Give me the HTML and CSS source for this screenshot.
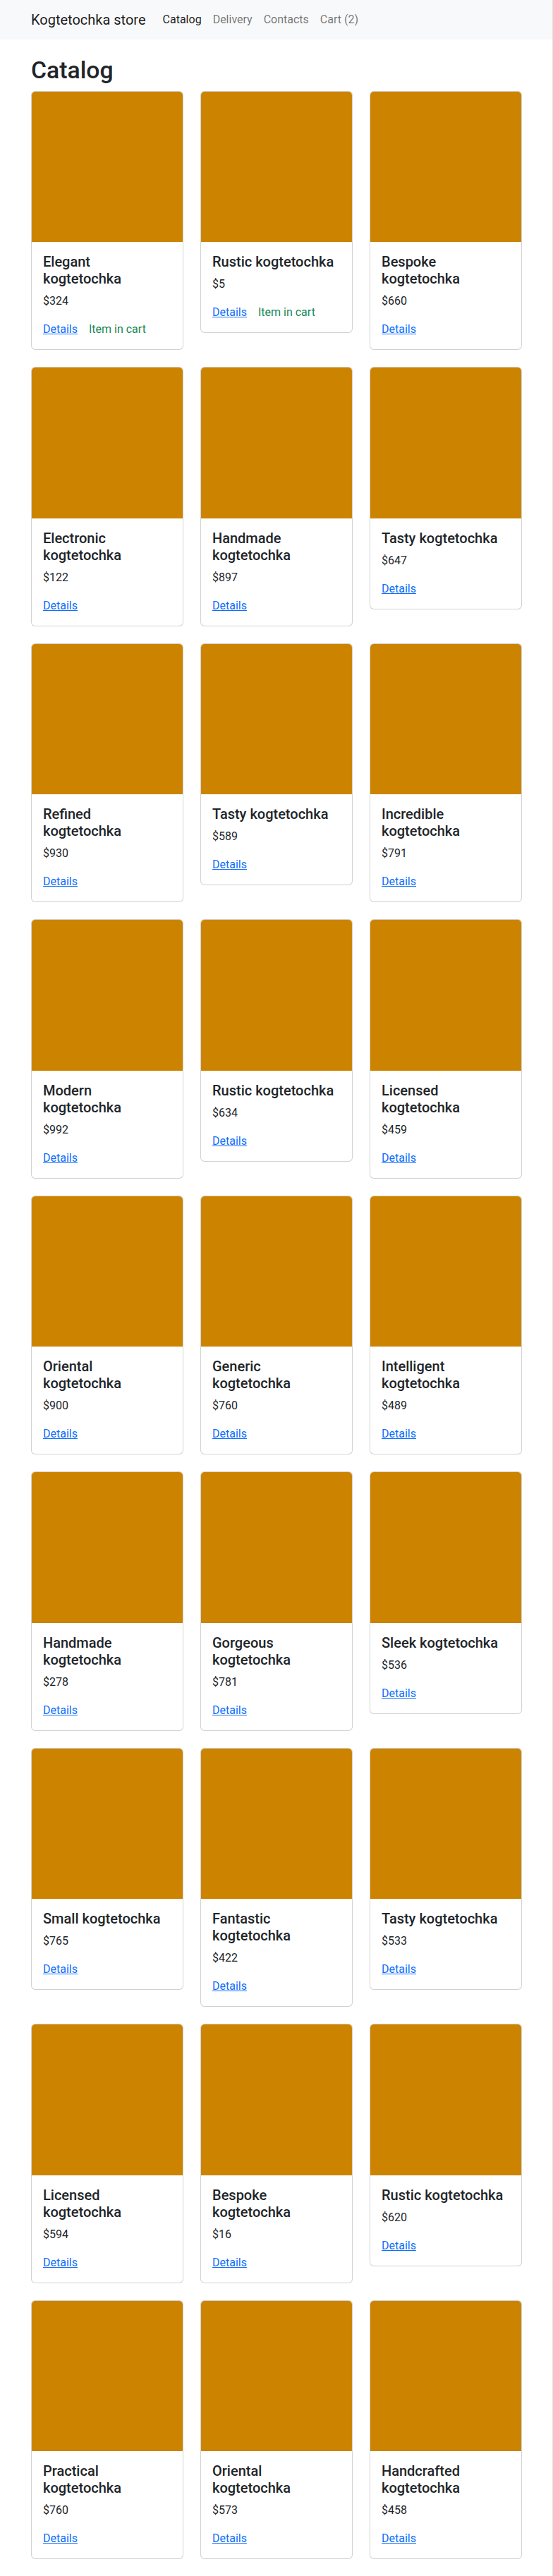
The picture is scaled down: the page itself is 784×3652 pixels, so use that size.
FILE: index.html
```html
<!DOCTYPE html>
<html lang="en">
<head>
<meta charset="utf-8">
<title>Kogtetochka store</title>
<link rel="stylesheet" href="styles.css">
</head>
<body>
<nav class="navbar">
  <div class="container nav-inner">
    <a class="brand" href="#">Kogtetochka store</a>
    <ul class="nav-links">
      <li><a class="nav-link active" href="#">Catalog</a></li>
      <li><a class="nav-link" href="#">Delivery</a></li>
      <li><a class="nav-link" href="#">Contacts</a></li>
      <li><a class="nav-link" href="#">Cart (2)</a></li>
    </ul>
  </div>
</nav>
<main class="container main">
  <h1 class="page-title">Catalog</h1>
  <div class="grid">
    <div class="card"><div class="card-img"></div><div class="card-body"><h5 class="card-title">Elegant kogtetochka</h5><p class="price">$324</p><div class="actions"><a href="#" class="details">Details</a><span class="in-cart">Item in cart</span></div></div></div>
    <div class="card"><div class="card-img"></div><div class="card-body"><h5 class="card-title">Rustic kogtetochka</h5><p class="price">$5</p><div class="actions"><a href="#" class="details">Details</a><span class="in-cart">Item in cart</span></div></div></div>
    <div class="card"><div class="card-img"></div><div class="card-body"><h5 class="card-title">Bespoke kogtetochka</h5><p class="price">$660</p><div class="actions"><a href="#" class="details">Details</a></div></div></div>

    <div class="card"><div class="card-img"></div><div class="card-body"><h5 class="card-title">Electronic kogtetochka</h5><p class="price">$122</p><div class="actions"><a href="#" class="details">Details</a></div></div></div>
    <div class="card"><div class="card-img"></div><div class="card-body"><h5 class="card-title">Handmade kogtetochka</h5><p class="price">$897</p><div class="actions"><a href="#" class="details">Details</a></div></div></div>
    <div class="card"><div class="card-img"></div><div class="card-body"><h5 class="card-title">Tasty kogtetochka</h5><p class="price">$647</p><div class="actions"><a href="#" class="details">Details</a></div></div></div>

    <div class="card"><div class="card-img"></div><div class="card-body"><h5 class="card-title">Refined kogtetochka</h5><p class="price">$930</p><div class="actions"><a href="#" class="details">Details</a></div></div></div>
    <div class="card"><div class="card-img"></div><div class="card-body"><h5 class="card-title">Tasty kogtetochka</h5><p class="price">$589</p><div class="actions"><a href="#" class="details">Details</a></div></div></div>
    <div class="card"><div class="card-img"></div><div class="card-body"><h5 class="card-title">Incredible kogtetochka</h5><p class="price">$791</p><div class="actions"><a href="#" class="details">Details</a></div></div></div>

    <div class="card"><div class="card-img"></div><div class="card-body"><h5 class="card-title">Modern kogtetochka</h5><p class="price">$992</p><div class="actions"><a href="#" class="details">Details</a></div></div></div>
    <div class="card"><div class="card-img"></div><div class="card-body"><h5 class="card-title">Rustic kogtetochka</h5><p class="price">$634</p><div class="actions"><a href="#" class="details">Details</a></div></div></div>
    <div class="card"><div class="card-img"></div><div class="card-body"><h5 class="card-title">Licensed kogtetochka</h5><p class="price">$459</p><div class="actions"><a href="#" class="details">Details</a></div></div></div>

    <div class="card"><div class="card-img"></div><div class="card-body"><h5 class="card-title">Oriental kogtetochka</h5><p class="price">$900</p><div class="actions"><a href="#" class="details">Details</a></div></div></div>
    <div class="card"><div class="card-img"></div><div class="card-body"><h5 class="card-title">Generic kogtetochka</h5><p class="price">$760</p><div class="actions"><a href="#" class="details">Details</a></div></div></div>
    <div class="card"><div class="card-img"></div><div class="card-body"><h5 class="card-title">Intelligent kogtetochka</h5><p class="price">$489</p><div class="actions"><a href="#" class="details">Details</a></div></div></div>

    <div class="card"><div class="card-img"></div><div class="card-body"><h5 class="card-title">Handmade kogtetochka</h5><p class="price">$278</p><div class="actions"><a href="#" class="details">Details</a></div></div></div>
    <div class="card"><div class="card-img"></div><div class="card-body"><h5 class="card-title">Gorgeous kogtetochka</h5><p class="price">$781</p><div class="actions"><a href="#" class="details">Details</a></div></div></div>
    <div class="card"><div class="card-img"></div><div class="card-body"><h5 class="card-title">Sleek kogtetochka</h5><p class="price">$536</p><div class="actions"><a href="#" class="details">Details</a></div></div></div>

    <div class="card"><div class="card-img"></div><div class="card-body"><h5 class="card-title">Small kogtetochka</h5><p class="price">$765</p><div class="actions"><a href="#" class="details">Details</a></div></div></div>
    <div class="card"><div class="card-img"></div><div class="card-body"><h5 class="card-title">Fantastic kogtetochka</h5><p class="price">$422</p><div class="actions"><a href="#" class="details">Details</a></div></div></div>
    <div class="card"><div class="card-img"></div><div class="card-body"><h5 class="card-title">Tasty kogtetochka</h5><p class="price">$533</p><div class="actions"><a href="#" class="details">Details</a></div></div></div>

    <div class="card"><div class="card-img"></div><div class="card-body"><h5 class="card-title">Licensed kogtetochka</h5><p class="price">$594</p><div class="actions"><a href="#" class="details">Details</a></div></div></div>
    <div class="card"><div class="card-img"></div><div class="card-body"><h5 class="card-title">Bespoke kogtetochka</h5><p class="price">$16</p><div class="actions"><a href="#" class="details">Details</a></div></div></div>
    <div class="card"><div class="card-img"></div><div class="card-body"><h5 class="card-title">Rustic kogtetochka</h5><p class="price">$620</p><div class="actions"><a href="#" class="details">Details</a></div></div></div>

    <div class="card"><div class="card-img"></div><div class="card-body"><h5 class="card-title">Practical kogtetochka</h5><p class="price">$760</p><div class="actions"><a href="#" class="details">Details</a></div></div></div>
    <div class="card"><div class="card-img"></div><div class="card-body"><h5 class="card-title">Oriental kogtetochka</h5><p class="price">$573</p><div class="actions"><a href="#" class="details">Details</a></div></div></div>
    <div class="card"><div class="card-img"></div><div class="card-body"><h5 class="card-title">Handcrafted kogtetochka</h5><p class="price">$458</p><div class="actions"><a href="#" class="details">Details</a></div></div></div>
  </div>
</main>
</body>
</html>
```
FILE: styles.css
```css
*, *::before, *::after { box-sizing: border-box; }
html { background: #fff; }
body {
  margin: 0;
  font-family: Roboto, "Noto Sans", "Liberation Sans", Arial, sans-serif;
  font-size: 16px;
  line-height: 1.5;
  color: #212529;
  background: #fff;
}
body::after {
  content: "";
  position: fixed;
  top: 0;
  right: 0;
  bottom: 0;
  width: 1px;
  background: #e4e4e4;
}
a { color: #0d6efd; }
.container {
  width: 100%;
  max-width: 720px;
  margin: 0 auto;
  padding: 0 12px;
}
.navbar {
  background: #f8f9fa;
  padding: 8px 0;
}
.nav-inner {
  display: flex;
  align-items: center;
  height: 40px;
}
.brand {
  font-size: 20px;
  line-height: 30px;
  padding: 5px 0;
  margin-right: 16px;
  color: rgba(0, 0, 0, 0.9);
  text-decoration: none;
  white-space: nowrap;
}
.nav-links {
  display: flex;
  list-style: none;
  margin: 0;
  padding: 0;
}
.nav-link {
  display: block;
  padding: 8px;
  color: rgba(0, 0, 0, 0.55);
  text-decoration: none;
}
.nav-link.active { color: rgba(0, 0, 0, 0.9); }
.main { padding-top: 24px; padding-bottom: 24px; }
.page-title {
  margin: 0 0 8px;
  font-size: 33.76px;
  font-weight: 500;
  line-height: 1.2;
}
.grid {
  display: grid;
  grid-template-columns: repeat(3, 1fr);
  gap: 24px;
  align-items: start;
}
.card {
  border: 1px solid rgba(0, 0, 0, 0.175);
  border-radius: 6px;
  background: #fff;
  overflow: hidden;
}
.card-img {
  height: 213.5px;
  background: #cc8400;
}
.card-body { padding: 16px; }
.card-title {
  margin: 0 0 8px;
  font-size: 20px;
  font-weight: 500;
  line-height: 1.2;
}
.price { margin: 0 0 16px; }
.actions {
  display: flex;
  gap: 16px;
}
.details { color: #0d6efd; text-decoration: underline; }
.in-cart { color: #198754; }
```
